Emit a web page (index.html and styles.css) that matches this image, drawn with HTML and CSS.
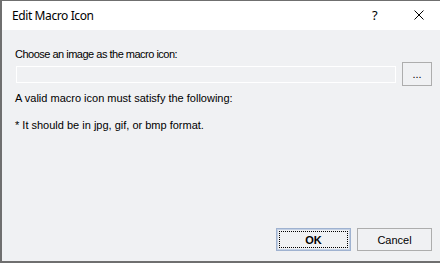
FILE: index.html
```html
<!DOCTYPE html>
<html>
<head>
<meta charset="utf-8">
<link rel="stylesheet" href="styles.css">
</head>
<body>
<div class="window">
  <div class="titlebar">
    <span class="title">Edit Macro Icon</span>
    <span class="help">?</span>
    <span class="close">
      <svg width="10" height="10" viewBox="0 0 10 10"><path d="M0.5 0.5 L9.5 9.5 M9.5 0.5 L0.5 9.5" stroke="#000" stroke-width="1" fill="none"/></svg>
    </span>
  </div>
  <div class="content">
    <div class="label choose">Choose an image as the macro icon:</div>
    <div class="pick-row">
      <div class="path-field"></div>
      <div class="browse">...</div>
    </div>
    <div class="label info">A valid macro icon must satisfy the following:</div>
    <div class="label rule">* It should be in jpg, gif, or bmp format.</div>
    <div class="spacer"></div>
    <div class="actions">
      <div class="btn ok"><span class="focus">OK</span></div>
      <div class="btn">Cancel</div>
    </div>
  </div>
</div>
</body>
</html>
```
FILE: styles.css
```css
html, body {
  margin: 0;
  padding: 0;
  background: #ffffff;
  overflow: hidden;
}
.window {
  width: 438px;
  height: 260px;
  border-left: 2px solid #6f6f6f;
  border-top: 1px solid #6f6f6f;
  border-bottom: 2px solid #6f6f6f;
  display: flex;
  flex-direction: column;
  font-family: "Liberation Sans", Arial, sans-serif;
}
.titlebar {
  height: 29px;
  padding-bottom: 1px;
  box-sizing: border-box;
  background: #ffffff;
  display: flex;
  align-items: center;
  font-family: "Noto Sans", "Open Sans", sans-serif;
  font-size: 12px;
  color: #000;
}
.title {
  margin-left: 10px;
  flex: 1;
  letter-spacing: -0.4px;
}
.help {
  width: 6px;
  margin-right: 36px;
  font-size: 13px;
  line-height: 13px;
}
.close {
  width: 10px;
  height: 10px;
  margin-right: 16px;
  display: flex;
}
.content {
  flex: 1;
  background: #f0f1f3;
  padding: 18px 8px 10px 13px;
  display: flex;
  flex-direction: column;
  font-size: 11px;
  color: #000;
}
.label {
  line-height: 13px;
}
.choose {
  letter-spacing: -0.5px;
}
.pick-row {
  display: flex;
  align-items: center;
  margin-top: 1px;
}
.path-field {
  width: 378px;
  height: 15px;
  border: 1px solid #ffffff;
  margin-left: 1px;
}
.browse {
  width: 28px;
  height: 22px;
  margin-left: 6px;
  border: 1px solid #adadad;
  display: flex;
  align-items: center;
  justify-content: center;
  font-size: 11px;
}
.info {
  margin-top: 6px;
}
.rule {
  margin-top: 14px;
}
.spacer {
  flex: 1;
}
.actions {
  display: flex;
  justify-content: flex-end;
  gap: 6px;
}
.btn {
  width: 73px;
  height: 21px;
  border: 1px solid #adadad;
  background: #f0f1f3;
  display: flex;
  align-items: center;
  justify-content: center;
  font-size: 11px;
}
.btn.ok {
  border-color: #9fb2d0;
  box-shadow: inset 0 0 0 1px #c3d0e4;
  font-weight: bold;
}
.focus {
  display: flex;
  align-items: center;
  justify-content: center;
  width: 67px;
  height: 15px;
  border: 1px dotted #000;
}
```
